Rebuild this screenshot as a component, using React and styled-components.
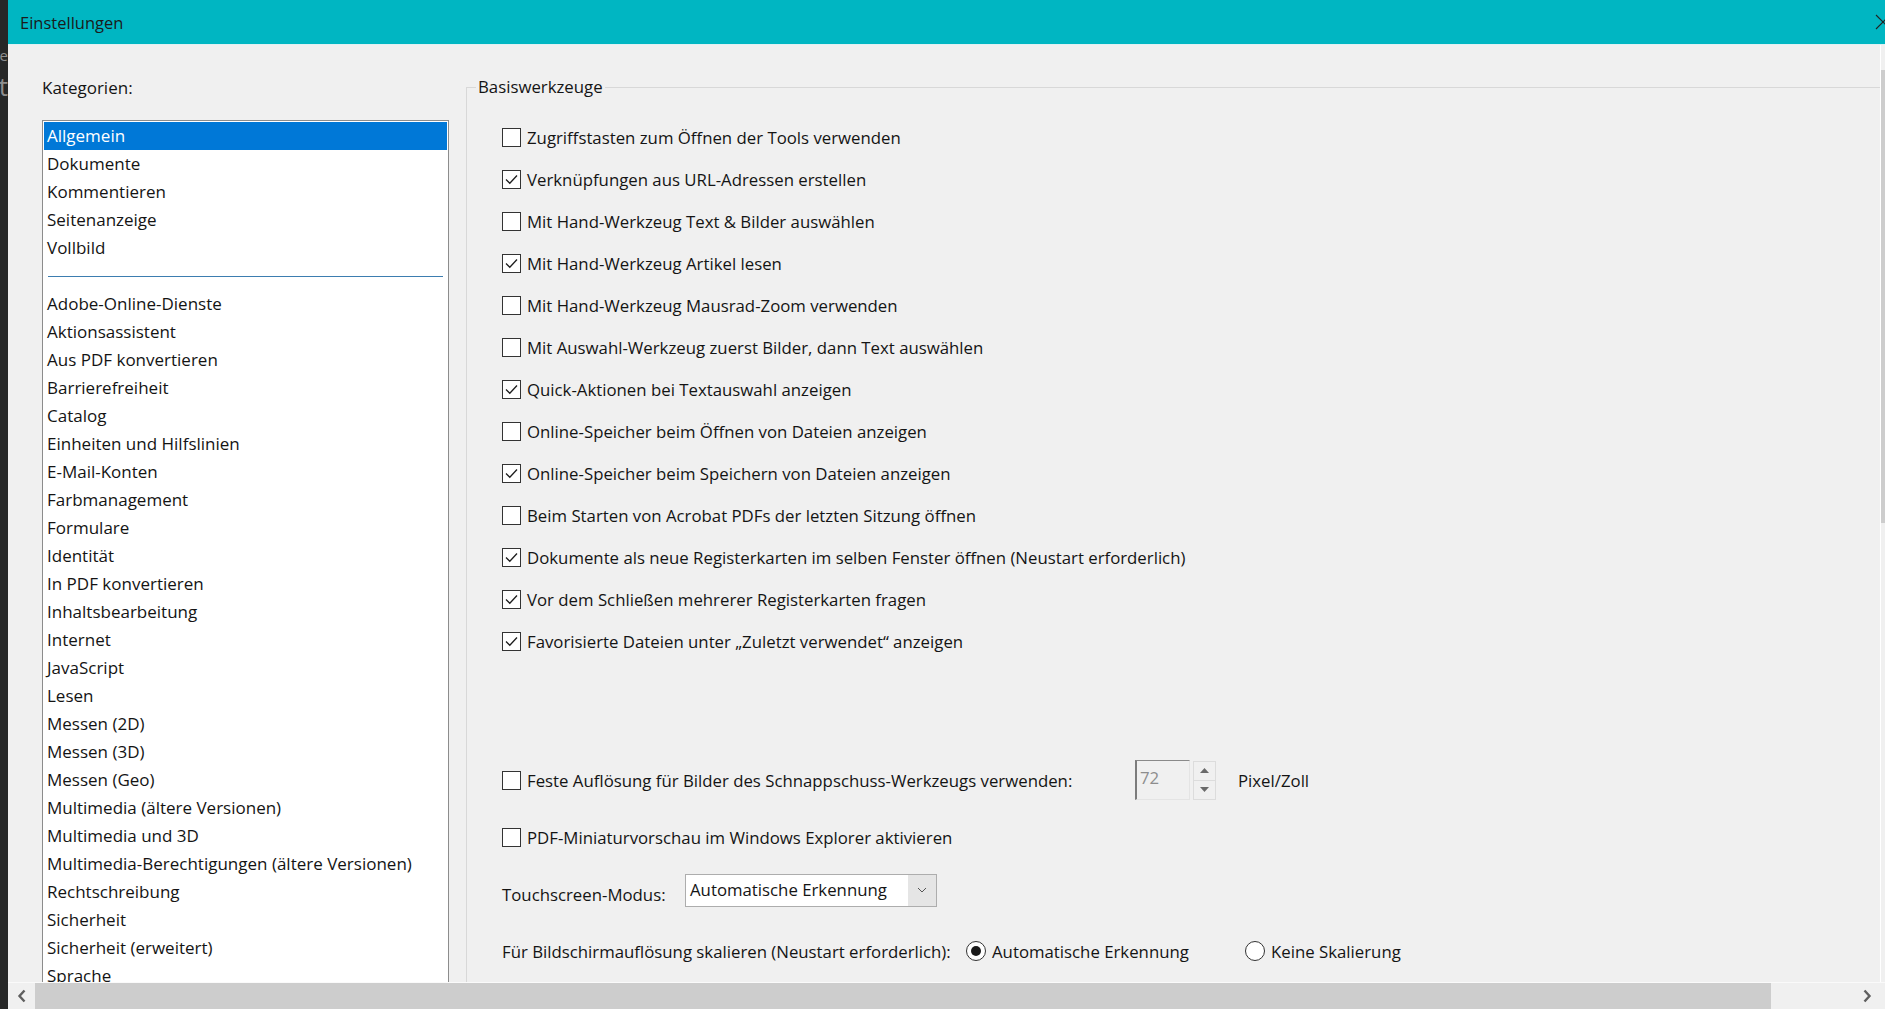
import React from 'react';
import styled, { createGlobalStyle } from 'styled-components';

const uiFont = `'Open Sans', 'Noto Sans', sans-serif`;

const GlobalStyle = createGlobalStyle`
  html, body {
    margin: 0;
    padding: 0;
    overflow: hidden;
    background: #f0f0f0;
  }
  * { box-sizing: border-box; }
`;

const categories = [
  'Adobe-Online-Dienste',
  'Aktionsassistent',
  'Aus PDF konvertieren',
  'Barrierefreiheit',
  'Catalog',
  'Einheiten und Hilfslinien',
  'E-Mail-Konten',
  'Farbmanagement',
  'Formulare',
  'Identität',
  'In PDF konvertieren',
  'Inhaltsbearbeitung',
  'Internet',
  'JavaScript',
  'Lesen',
  'Messen (2D)',
  'Messen (3D)',
  'Messen (Geo)',
  'Multimedia (ältere Versionen)',
  'Multimedia und 3D',
  'Multimedia-Berechtigungen (ältere Versionen)',
  'Rechtschreibung',
  'Sicherheit',
  'Sicherheit (erweitert)',
  'Sprache',
  'Suchen',
  'Tracker',
];

const topCategories = ['Allgemein', 'Dokumente', 'Kommentieren', 'Seitenanzeige', 'Vollbild'];

const options = [
  { label: 'Zugriffstasten zum Öffnen der Tools verwenden', checked: false },
  { label: 'Verknüpfungen aus URL-Adressen erstellen', checked: true },
  { label: 'Mit Hand-Werkzeug Text & Bilder auswählen', checked: false },
  { label: 'Mit Hand-Werkzeug Artikel lesen', checked: true },
  { label: 'Mit Hand-Werkzeug Mausrad-Zoom verwenden', checked: false },
  { label: 'Mit Auswahl-Werkzeug zuerst Bilder, dann Text auswählen', checked: false },
  { label: 'Quick-Aktionen bei Textauswahl anzeigen', checked: true },
  { label: 'Online-Speicher beim Öffnen von Dateien anzeigen', checked: false },
  { label: 'Online-Speicher beim Speichern von Dateien anzeigen', checked: true },
  { label: 'Beim Starten von Acrobat PDFs der letzten Sitzung öffnen', checked: false },
  { label: 'Dokumente als neue Registerkarten im selben Fenster öffnen (Neustart erforderlich)', checked: true },
  { label: 'Vor dem Schließen mehrerer Registerkarten fragen', checked: true },
  { label: 'Favorisierte Dateien unter „Zuletzt verwendet“ anzeigen', checked: true },
];

const CheckBox = ({ checked }) => (
  <Box>
    {checked && (
      <svg width="17" height="17" viewBox="0 0 17 17">
        <polyline points="3,8.5 6.8,12.3 14,4.5" fill="none" stroke="#1e1e1e" strokeWidth="1.3" />
      </svg>
    )}
  </Box>
);

const CheckOption = ({ checked, children, width }) => (
  <Option $width={width}>
    <CheckBox checked={checked} />
    <span>{children}</span>
  </Option>
);

const Chevron = ({ dir }) => (
  <svg width="10" height="14" viewBox="0 0 10 14">
    <polyline
      points={dir === 'left' ? '7.5,1.5 2.5,7 7.5,12.5' : '2.5,1.5 7.5,7 2.5,12.5'}
      fill="none"
      stroke="#5f5f5f"
      strokeWidth="2.4"
    />
  </svg>
);

const App = () => {
  return (
    <>
      <GlobalStyle />
      <Page>
        <DarkStrip>
          <Ghost $size={15} $top={48}>te</Ghost>
          <Ghost $size={26} $top={10}>t</Ghost>
        </DarkStrip>
        <Window>
          <TitleBar>
            <span>Einstellungen</span>
            <Close>
              <svg width="16" height="16" viewBox="0 0 16 16">
                <line x1="1" y1="1" x2="15" y2="15" stroke="#222" strokeWidth="1.1" />
                <line x1="15" y1="1" x2="1" y2="15" stroke="#222" strokeWidth="1.1" />
              </svg>
            </Close>
          </TitleBar>

          <Main>
            <Content>
              <LeftCol>
                <CatLabel>Kategorien:</CatLabel>
                <ListBox>
                  {topCategories.map((c, i) => (
                    <ListItem key={c} $selected={i === 0}>{c}</ListItem>
                  ))}
                  <ListSeparator />
                  {categories.map((c) => (
                    <ListItem key={c}>{c}</ListItem>
                  ))}
                </ListBox>
              </LeftCol>

              <RightCol>
                <GroupBox>
                  <Legend>Basiswerkzeuge</Legend>
                  <CheckList>
                    {options.map((o) => (
                      <CheckOption key={o.label} checked={o.checked}>{o.label}</CheckOption>
                    ))}
                  </CheckList>

                  <Lower>
                    <Row>
                      <CheckOption width={633}>
                        Feste Auflösung für Bilder des Schnappschuss-Werkzeugs verwenden:
                      </CheckOption>
                      <SpinInput>72</SpinInput>
                      <SpinButtons>
                        <SpinBtn>
                          <svg width="9" height="5" viewBox="0 0 9 5"><polygon points="0,5 4.5,0 9,5" fill="#6a6a6a" /></svg>
                        </SpinBtn>
                        <SpinBtn>
                          <svg width="9" height="5" viewBox="0 0 9 5"><polygon points="0,0 9,0 4.5,5" fill="#6a6a6a" /></svg>
                        </SpinBtn>
                      </SpinButtons>
                      <Unit>Pixel/Zoll</Unit>
                    </Row>

                    <Row>
                      <CheckOption>PDF-Miniaturvorschau im Windows Explorer aktivieren</CheckOption>
                    </Row>

                    <Row>
                      <FieldLabel $width={183}>Touchscreen-Modus:</FieldLabel>
                      <Select>
                        <SelectValue>Automatische Erkennung</SelectValue>
                        <SelectArrow>
                          <svg width="10" height="6" viewBox="0 0 10 6">
                            <polyline points="1,1 5,5 9,1" fill="none" stroke="#555" strokeWidth="1" />
                          </svg>
                        </SelectArrow>
                      </Select>
                    </Row>

                    <Row>
                      <FieldLabel $width={464}>Für Bildschirmauflösung skalieren (Neustart erforderlich):</FieldLabel>
                      <RadioOption $width={279}>
                        <Radio $on />
                        <span>Automatische Erkennung</span>
                      </RadioOption>
                      <RadioOption>
                        <Radio />
                        <span>Keine Skalierung</span>
                      </RadioOption>
                    </Row>
                  </Lower>
                </GroupBox>
              </RightCol>
            </Content>

            <VScroll>
              <VThumb />
            </VScroll>
          </Main>

          <HScroll>
            <ScrollArrow><Chevron dir="left" /></ScrollArrow>
            <HThumb />
            <HTrack />
            <ScrollArrow><Chevron dir="right" /></ScrollArrow>
            <Corner />
          </HScroll>
        </Window>
      </Page>
    </>
  );
};

export default App;


const Page = styled.div`
  display: flex;
  width: 1885px;
  height: 1009px;
  overflow: hidden;
  font-family: ${uiFont};
  font-size: 17px;
  color: #141414;
`;

const DarkStrip = styled.div`
  width: 8px;
  flex-shrink: 0;
  background: #262727;
  display: flex;
  flex-direction: column;
  align-items: flex-end;
  overflow: hidden;
`;

const Ghost = styled.span`
  margin-top: ${({ $top }) => $top}px;
  font-size: ${({ $size }) => $size}px;
  line-height: 1;
  color: #8e8e8e;
  white-space: nowrap;
`;

const Window = styled.div`
  flex: 1;
  min-width: 0;
  display: flex;
  flex-direction: column;
`;

const TitleBar = styled.div`
  height: 45px;
  flex-shrink: 0;
  background: #00b6c2;
  display: flex;
  align-items: center;
  justify-content: space-between;
  padding-left: 12px;
  font-size: 16.5px;
  color: #1b1b1b;
  border-bottom: 1px solid #dff1f3;
`;

const Close = styled.span`
  width: 10px;
  height: 16px;
  overflow: hidden;
  display: flex;

  svg { flex-shrink: 0; }
`;

const Main = styled.div`
  flex: 1;
  min-height: 0;
  display: flex;
`;

const Content = styled.div`
  flex: 1;
  min-width: 0;
  display: flex;
  padding-left: 34px;
  overflow: hidden;
  background: #f0f0f0;
`;

const LeftCol = styled.div`
  width: 407px;
  flex-shrink: 0;
  display: flex;
  flex-direction: column;
  padding-top: 31px;
`;

const CatLabel = styled.div`
  line-height: 24px;
  margin-bottom: 20px;
`;

const ListBox = styled.div`
  background: #fff;
  border: 1px solid #8c8c8c;
  padding: 1px;
`;

const ListItem = styled.div`
  height: 28px;
  line-height: 28px;
  padding: 0 3px;
  white-space: nowrap;
  background: ${({ $selected }) => ($selected ? '#0078d7' : 'transparent')};
  color: ${({ $selected }) => ($selected ? '#fff' : '#141414')};
`;

const ListSeparator = styled.div`
  height: 28px;
  display: flex;
  align-items: center;
  padding: 0 4px;

  &::after {
    content: '';
    flex: 1;
    height: 1px;
    background: #3d7db0;
  }
`;

const RightCol = styled.div`
  flex: 1;
  min-width: 0;
  margin-left: 17px;
  padding-top: 31px;
  font-size: 16.8px;
`;

const GroupBox = styled.fieldset`
  margin: 0;
  padding: 18px 0 0 0;
  min-width: 0;
  height: 1000px;
  border: 1px solid #d8d8d8;
  border-right: none;
  border-bottom: none;
`;

const Legend = styled.legend`
  margin-left: 9px;
  padding: 0 2px;
  line-height: 22px;
`;

const CheckList = styled.div`
  display: flex;
  flex-direction: column;
  padding-left: 35px;
`;

const Option = styled.label`
  height: 42px;
  display: flex;
  align-items: center;
  gap: 6px;
  white-space: nowrap;
  width: ${({ $width }) => ($width ? `${$width}px` : 'auto')};
  flex-shrink: 0;
`;

const Box = styled.span`
  width: 19px;
  height: 19px;
  flex-shrink: 0;
  border: 1px solid #333;
  background: #fff;
  display: flex;
  align-items: center;
  justify-content: center;
`;

const Lower = styled.div`
  margin-top: 97px;
  padding-left: 35px;
  display: flex;
  flex-direction: column;
  gap: 15px;
`;

const Row = styled.div`
  height: 42px;
  display: flex;
  align-items: center;
  white-space: nowrap;
`;

const SpinInput = styled.div`
  width: 55px;
  height: 40px;
  padding: 4px 0 0 3px;
  color: #8d8d8d;
  line-height: 26px;
  border-top: 1px solid #8a8a8a;
  border-left: 2px solid #7c7c7c;
  border-right: 1px solid #e4e4e4;
  border-bottom: 1px solid #e4e4e4;
`;

const SpinButtons = styled.div`
  margin-left: 3px;
  width: 23px;
  height: 39px;
  display: flex;
  flex-direction: column;
`;

const SpinBtn = styled.div`
  flex: 1;
  display: flex;
  align-items: center;
  justify-content: center;
  border: 1px solid #dcdcdc;
  background: #f0f0f0;

  & + & { border-top: none; }
`;

const Unit = styled.span`
  margin-left: 22px;
`;

const FieldLabel = styled.span`
  width: ${({ $width }) => $width}px;
  flex-shrink: 0;
`;

const Select = styled.div`
  width: 252px;
  height: 33px;
  margin-bottom: 8px;
  display: flex;
  border: 1px solid #adadad;
  background: #e5e5e5;
`;

const SelectValue = styled.div`
  width: 222px;
  background: #fff;
  padding-left: 4px;
  line-height: 30px;
`;

const SelectArrow = styled.div`
  flex: 1;
  display: flex;
  align-items: center;
  justify-content: center;
`;

const RadioOption = styled.label`
  display: flex;
  align-items: center;
  gap: 6px;
  width: ${({ $width }) => ($width ? `${$width}px` : 'auto')};
  flex-shrink: 0;
`;

const Radio = styled.span`
  width: 20px;
  height: 20px;
  border-radius: 50%;
  border: 1px solid #333;
  background: #fff;
  display: flex;
  align-items: center;
  justify-content: center;

  &::after {
    content: '';
    width: 10px;
    height: 10px;
    border-radius: 50%;
    background: #1a1a1a;
    display: ${({ $on }) => ($on ? 'block' : 'none')};
  }
`;

const VScroll = styled.div`
  width: 5px;
  flex-shrink: 0;
  border-left: 1px solid #fff;
  background: #f0f0f0;
  padding-top: 25px;
`;

const VThumb = styled.div`
  height: 453px;
  background: #cdcdcd;
`;

const HScroll = styled.div`
  height: 27px;
  flex-shrink: 0;
  display: flex;
  background: #f0f0f0;
  border-top: 1px solid #fafafa;
`;

const ScrollArrow = styled.div`
  width: 27px;
  flex-shrink: 0;
  display: flex;
  align-items: center;
  justify-content: center;
`;

const HThumb = styled.div`
  width: 1736px;
  flex-shrink: 0;
  background: #cdcdcd;
`;

const HTrack = styled.div`
  flex: 1;
`;

const Corner = styled.div`
  width: 5px;
  flex-shrink: 0;
`;
